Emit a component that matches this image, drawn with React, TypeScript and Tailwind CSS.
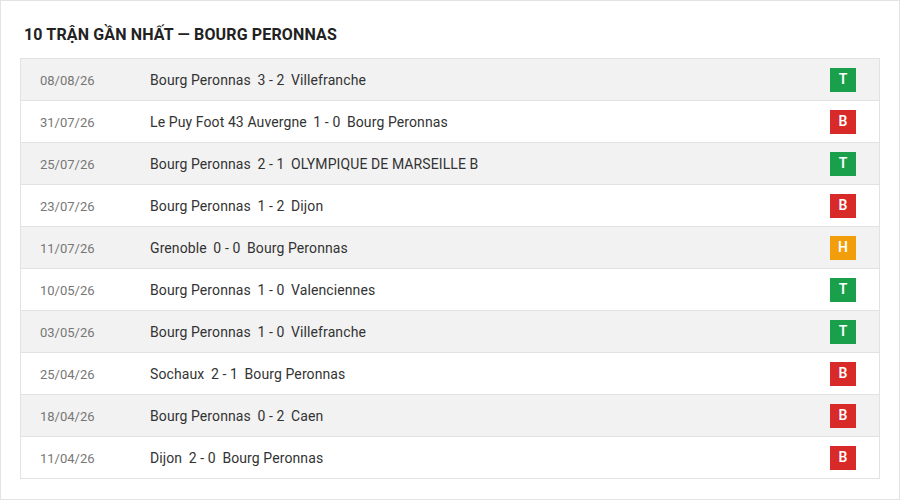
const matches = [
  { date: "08/08/26", home: "Bourg Peronnas", score: "3 - 2", away: "Villefranche", result: "T" },
  { date: "31/07/26", home: "Le Puy Foot 43 Auvergne", score: "1 - 0", away: "Bourg Peronnas", result: "B" },
  { date: "25/07/26", home: "Bourg Peronnas", score: "2 - 1", away: "OLYMPIQUE DE MARSEILLE B", result: "T" },
  { date: "23/07/26", home: "Bourg Peronnas", score: "1 - 2", away: "Dijon", result: "B" },
  { date: "11/07/26", home: "Grenoble", score: "0 - 0", away: "Bourg Peronnas", result: "H" },
  { date: "10/05/26", home: "Bourg Peronnas", score: "1 - 0", away: "Valenciennes", result: "T" },
  { date: "03/05/26", home: "Bourg Peronnas", score: "1 - 0", away: "Villefranche", result: "T" },
  { date: "25/04/26", home: "Sochaux", score: "2 - 1", away: "Bourg Peronnas", result: "B" },
  { date: "18/04/26", home: "Bourg Peronnas", score: "0 - 2", away: "Caen", result: "B" },
  { date: "11/04/26", home: "Dijon", score: "2 - 0", away: "Bourg Peronnas", result: "B" },
];

const badgeColor: Record<string, string> = {
  T: "bg-[#1a9f4a]",
  B: "bg-[#d92a2a]",
  H: "bg-[#f29d0c]",
};

export default function App() {
  return (
    <div
      className="w-[900px] h-[500px] bg-white border border-[#e3e3e3] px-[19px] pt-[24px]"
      style={{ fontFamily: "Roboto, 'Liberation Sans', sans-serif" }}
    >
      <h1 className="pl-1 h-5 leading-5 text-[16px] font-bold text-[#222] tracking-[0.15px]">
        10 TRẬN GẦN NHẤT — BOURG PERONNAS
      </h1>

      <div className="mt-[13px] border border-[#e2e2e2]">
        {matches.map((m, i) => (
          <div
            key={i}
            className={`flex items-center h-[41px] ${i < matches.length - 1 ? "border-b border-[#e2e2e2] box-content" : ""} ${i % 2 === 0 ? "bg-[#f2f2f2]" : "bg-white"}`}
          >
            <div className="w-[129px] pl-[19px] pt-[2px] text-[13px] text-[#777]">{m.date}</div>
            <div className="flex-1 pt-[2px] text-[14px] text-[#333] tracking-[0.1px]">
              {m.home} <span className="mx-[3px]">{m.score}</span> {m.away}
            </div>
            <div className="pr-[23px]">
              <div
                className={`w-[26px] h-6 flex items-center justify-center text-white text-[14px] font-semibold ${badgeColor[m.result]}`}
              >
                {m.result}
              </div>
            </div>
          </div>
        ))}
      </div>
    </div>
  );
}
